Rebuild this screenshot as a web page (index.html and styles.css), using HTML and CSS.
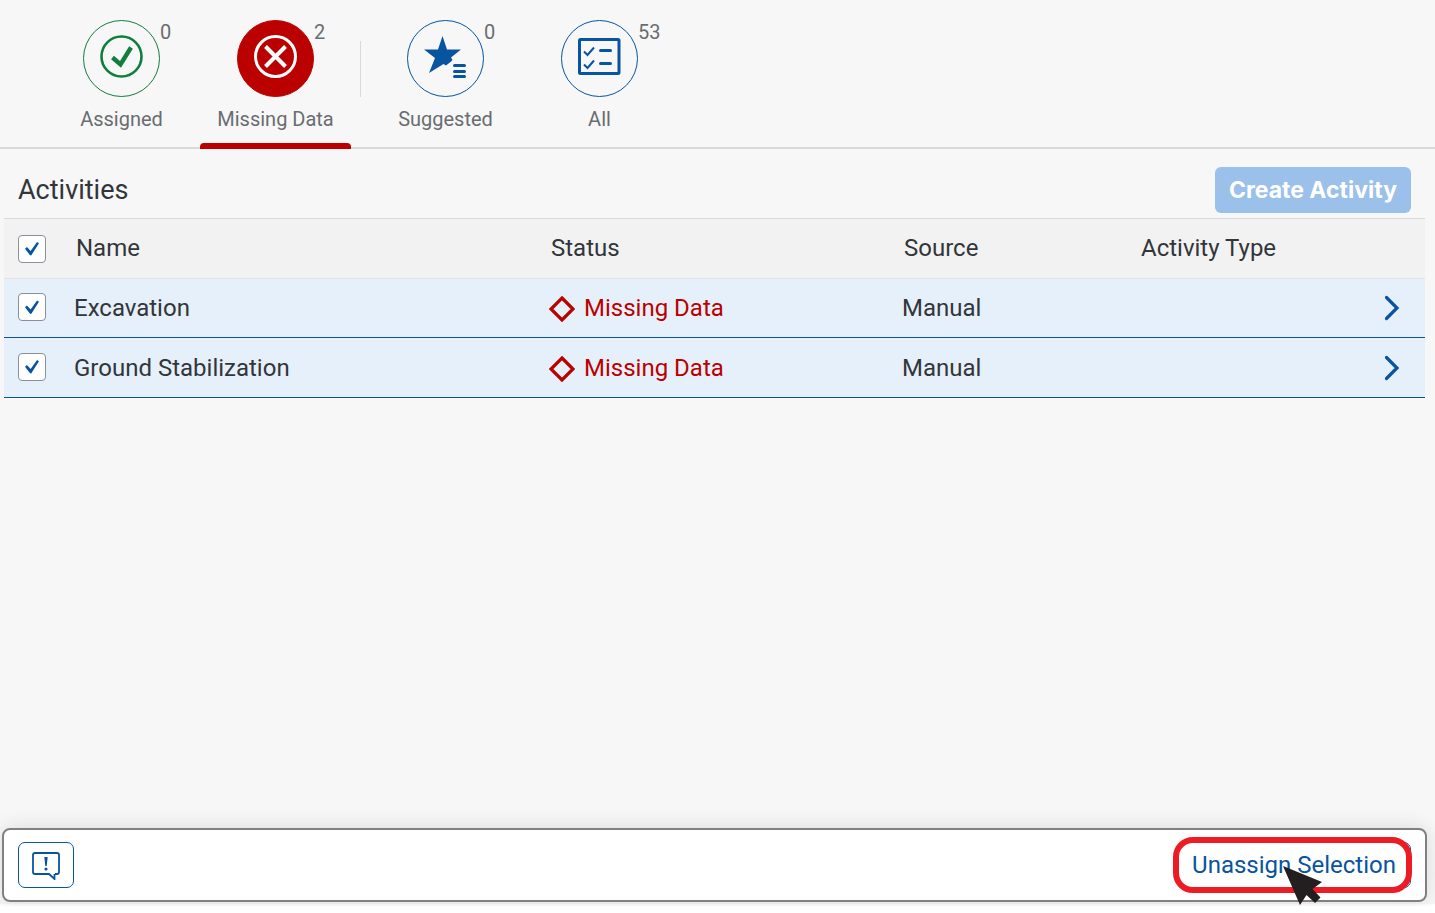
FILE: index.html
```html
<!DOCTYPE html>
<html lang="en">
<head>
<meta charset="utf-8">
<title>Activities</title>
<link rel="stylesheet" href="styles.css">
</head>
<body>
<main class="page">
  <nav class="tabs" aria-label="Activity filters">
    <button class="tab tab-positive" type="button">
      <span class="tab-circle">
        <svg width="44" height="44" viewBox="0 0 44 44" aria-hidden="true"><circle cx="21.500" cy="21.500" r="20" fill="none" stroke="currentColor" stroke-width="2.600"/><path d="M12.500 22.500L20.500 29.500L31 12.500" fill="none" stroke="currentColor" stroke-width="4.400"/></svg>
        <span class="tab-count">0</span>
      </span>
      <span class="tab-label">Assigned</span>
    </button>
    <button class="tab tab-negative" type="button" aria-current="true">
      <span class="tab-circle">
        <svg width="44" height="44" viewBox="0 0 44 44" aria-hidden="true"><circle cx="21.500" cy="21.500" r="20" fill="none" stroke="currentColor" stroke-width="3"/><path d="M11.500 11.500L31.500 31.500M31.500 11.500L11.500 31.500" fill="none" stroke="currentColor" stroke-width="4"/></svg>
        <span class="tab-count">2</span>
      </span>
      <span class="tab-label">Missing Data</span>
    </button>
    <span class="tab-separator"></span>
    <button class="tab" type="button">
      <span class="tab-circle">
        <svg width="44" height="44" viewBox="0 0 44 44" aria-hidden="true"><path d="M18.500 1L23 14.500H37L27 22.500L28.500 25L26.500 27L22 30.500L19.500 29L5 38L11 23L0 14.500H14Z" fill="currentColor"/><path d="M30.500 30.500H40.500M30.500 36.500H40.500M30.500 41.500H40.500" stroke="currentColor" stroke-width="3" stroke-linecap="round"/></svg>
        <span class="tab-count">0</span>
      </span>
      <span class="tab-label">Suggested</span>
    </button>
    <button class="tab" type="button">
      <span class="tab-circle">
        <svg width="44" height="44" viewBox="0 0 44 44" aria-hidden="true"><rect x="1.500" y="4.500" width="39.500" height="34" rx="1" fill="none" stroke="currentColor" stroke-width="3"/><path d="M6 16.500L9.500 20L16 12.500M6 29.500L9.500 33L16 25.500" fill="none" stroke="currentColor" stroke-width="2"/><path d="M22.500 15.500H32.500M22.500 28.500H32.500" stroke="currentColor" stroke-width="3" stroke-linecap="round"/></svg>
        <span class="tab-count">53</span>
      </span>
      <span class="tab-label">All</span>
    </button>
  </nav>

  <section class="activities">
    <header class="toolbar">
      <h1 class="title">Activities</h1>
      <button class="create" type="button" disabled>Create Activity</button>
    </header>
    <table class="table">
      <colgroup><col class="col-check"><col class="col-name"><col class="col-status"><col class="col-source"><col><col class="col-nav"></colgroup>
      <thead>
        <tr>
          <th><input class="check" type="checkbox" checked aria-label="Select all"></th>
          <th>Name</th>
          <th>Status</th>
          <th>Source</th>
          <th>Activity Type</th>
          <th></th>
        </tr>
      </thead>
      <tbody>
        <tr>
          <td><input class="check" type="checkbox" checked aria-label="Select Excavation"></td>
          <td>Excavation</td>
          <td><span class="status"><svg width="26" height="28" viewBox="0 0 26 28" aria-hidden="true"><path d="M13 4L24 15L13 26L2 15Z" fill="none" stroke="currentColor" stroke-width="3.200"/></svg>Missing Data</span></td>
          <td>Manual</td>
          <td></td>
          <td><button class="open" type="button" aria-label="Open Excavation"><svg width="16" height="26" viewBox="0 0 16 26" aria-hidden="true"><path d="M2.500 2.500L13 13L2.500 23.500" fill="none" stroke="currentColor" stroke-width="3.200" stroke-linecap="round"/></svg></button></td>
        </tr>
        <tr>
          <td><input class="check" type="checkbox" checked aria-label="Select Ground Stabilization"></td>
          <td>Ground Stabilization</td>
          <td><span class="status"><svg width="26" height="28" viewBox="0 0 26 28" aria-hidden="true"><path d="M13 4L24 15L13 26L2 15Z" fill="none" stroke="currentColor" stroke-width="3.200"/></svg>Missing Data</span></td>
          <td>Manual</td>
          <td></td>
          <td><button class="open" type="button" aria-label="Open Ground Stabilization"><svg width="16" height="26" viewBox="0 0 16 26" aria-hidden="true"><path d="M2.500 2.500L13 13L2.500 23.500" fill="none" stroke="currentColor" stroke-width="3.200" stroke-linecap="round"/></svg></button></td>
        </tr>
      </tbody>
    </table>
  </section>

  <footer class="footer">
    <button class="message" type="button" aria-label="Messages">
      <svg width="30" height="30" viewBox="0 0 30 30" aria-hidden="true"><path d="M24 24H26Q28 24 28 22V5Q28 3 26 3H4Q2 3 2 5V22Q2 24 4 24H18L23.500 29V24" fill="none" stroke="currentColor" stroke-width="1.800"/><path d="M13.300 7H16.700L15.700 16H14.300Z" fill="currentColor"/><circle cx="15" cy="19" r="1.600" fill="currentColor"/></svg>
    </button>
    <button class="unassign" type="button">Unassign Selection
      <span class="highlight"></span>
      <svg class="pointer" width="40" height="40" viewBox="0 0 40 40" aria-hidden="true"><path d="M0 0L39 16L29.500 23L37.500 31.500L32 37L23.500 29L17 39Z" fill="#231f20"/></svg>
    </button>
  </footer>
</main>
</body>
</html>
```
FILE: styles.css
```css
* { box-sizing: border-box; }

body {
  margin: 0;
  padding-bottom: 9px;
  min-height: 100vh;
  display: flex;
  flex-direction: column;
  background: #fff;
  color: #32363a;
  font: 24px/30px Roboto, "Open Sans", sans-serif;
}

button {
  font: inherit;
  color: #0854a0;
  padding: 0;
  border: 0;
  background: none;
}

svg { display: block; }

.page {
  flex: 1;
  display: flex;
  flex-direction: column;
  overflow: clip;
  overflow-clip-margin: 2px;
  background: #f7f7f7;
}

.tabs {
  display: flex;
  gap: 3px;
  padding: 20px 46px 0;
  border-bottom: 2px solid #d9d9d9;
}

.tab {
  width: 151px;
  height: 129px;
  margin-bottom: -2px;
  display: flex;
  flex-direction: column;
  align-items: center;
  gap: 9px;
}

.tab-circle {
  position: relative;
  width: 77px;
  height: 77px;
  padding-bottom: 4px;
  display: grid;
  place-items: center;
  border: 1px solid currentColor;
  border-radius: 50%;
}

.tab-count {
  position: absolute;
  left: 76px;
  top: -1px;
  font-size: 20px;
  line-height: 24px;
  color: #6a6d70;
}

.tab-label {
  font-size: 20px;
  line-height: 26px;
  color: #6a6d70;
}

.tab-positive { color: #107e3e; }

.tab-negative { color: #fff; }

.tab-negative .tab-circle {
  background: #b00;
  border-color: #b00;
}

.tab-negative::after {
  content: "";
  width: 100%;
  height: 6px;
  margin-top: auto;
  border-radius: 4px 4px 0 0;
  background: #b00;
}

.tab-separator {
  width: 1px;
  height: 56px;
  margin: 21px 6px 0;
  background: #d9d9d9;
}

.activities { padding: 0 10px 0 4px; }

.toolbar {
  display: flex;
  align-items: center;
  justify-content: space-between;
  height: 69px;
  padding: 12px 14px 0;
}

.title {
  margin: 0;
  font-size: 27px;
  font-weight: 400;
}

.create {
  height: 46px;
  padding: 0 14px;
  border-radius: 6px;
  background: #9bc0ea;
  color: #fff;
  font-family: Inter, "Open Sans", sans-serif;
  font-size: 23px;
  font-weight: 700;
}

.table {
  width: 100%;
  table-layout: fixed;
  border-collapse: collapse;
}

.col-check { width: 70px; }
.col-name { width: 475px; }
.col-status { width: 353px; }
.col-source { width: 237px; }
.col-nav { width: 60px; }

.table th, .table td {
  height: 60px;
  padding: 0;
  text-align: left;
  font-weight: 400;
}

.table th {
  padding-left: 2px;
  background: #f2f2f2;
  border-top: 1px solid #d9d9d9;
  border-bottom: 1px solid #e4e4e4;
}

.table td {
  height: 59px;
  background: #e5f0fa;
  border-bottom: 1px solid #0854a0;
}

.table tr:last-child td { height: 60px; }

.table th:not(:first-child) { padding-bottom: 2px; }

.table th:first-child, .table td:first-child { padding-left: 14px; }

.table td:first-child { padding-bottom: 2px; }

.check {
  appearance: none;
  width: 28px;
  height: 28px;
  margin: 0;
  border: 1px solid #89919a;
  border-radius: 4px;
  background: #fff;
  display: grid;
  place-items: center;
}

.check:checked::before {
  content: "";
  width: 14px;
  height: 14px;
  background: #0854a0;
  clip-path: polygon(0 52%, 14% 40%, 40% 68%, 86% 4%, 100% 12%, 44% 100%, 36% 98%);
}

.status {
  display: flex;
  align-items: center;
  gap: 9px;
  color: #b00;
}

.open {
  display: block;
  margin-left: 19px;
}

.footer {
  margin: auto 8px 2px 2px;
  height: 74px;
  padding: 0 14px;
  display: flex;
  align-items: center;
  justify-content: space-between;
  border: 2px solid #808080;
  border-radius: 8px;
  background: #fff;
  box-shadow: 0 0 20px rgba(0, 0, 0, .12);
}

.message {
  width: 56px;
  height: 46px;
  display: grid;
  place-items: center;
  border: 1px solid #0854a0;
  border-radius: 7px;
}

.unassign {
  position: relative;
  height: 46px;
  padding: 0 14px;
  border: 1px solid #0854a0;
  border-radius: 7px;
}

.highlight {
  position: absolute;
  inset: -6px -2px -6px -5px;
  border: 6px solid #ed1c24;
  border-radius: 20px;
}

.pointer {
  position: absolute;
  right: 87px;
  top: 23px;
}
```
